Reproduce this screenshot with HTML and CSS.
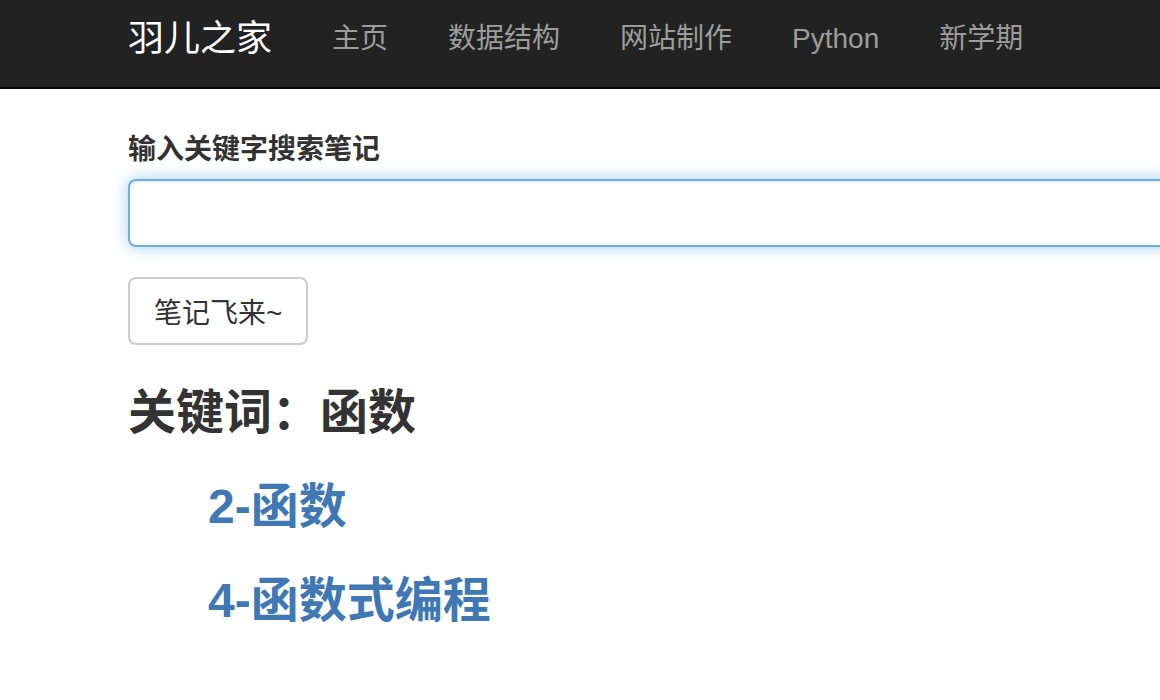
FILE: index.html
```html
<!DOCTYPE html>
<html lang="zh-CN">
<head>
<meta charset="utf-8">
<title>羽儿之家</title>
<link rel="stylesheet" href="styles.css">
</head>
<body>
<nav class="navbar">
  <div class="nav-inner">
    <a class="brand" href="#">羽儿之家</a>
    <ul class="nav-links">
      <li><a href="#">主页</a></li>
      <li><a href="#">数据结构</a></li>
      <li><a href="#">网站制作</a></li>
      <li><a href="#">Python</a></li>
      <li><a href="#">新学期</a></li>
    </ul>
  </div>
</nav>
<main class="container">
  <form class="search-form">
    <div class="form-group">
      <label class="form-label" for="kw">输入关键字搜索笔记</label>
      <input class="form-input" id="kw" type="text">
    </div>
    <button class="btn" type="button">笔记飞来~</button>
  </form>
  <h3 class="result-title">关键词：函数</h3>
  <ul class="result-list">
    <li><h3 class="result-item"><a href="#">2-函数</a></h3></li>
    <li><h3 class="result-item"><a href="#">4-函数式编程</a></h3></li>
  </ul>
</main>
</body>
</html>
```

FILE: styles.css
```css
html, body {
  margin: 0;
  padding: 0;
  overflow-x: hidden;
}
body {
  font-family: "Liberation Sans", "Noto Sans CJK SC", sans-serif;
  color: #333;
  background: #fff;
}
.navbar {
  background: #222;
  border-bottom: 2px solid #080808;
  height: 87px;
}
.nav-inner {
  display: flex;
  align-items: center;
  height: 100%;
  padding-left: 128px;
}
.brand {
  font-size: 36px;
  color: #fff;
  text-decoration: none;
  line-height: 40px;
  padding-right: 30px;
  margin-top: -10px;
}
.nav-links {
  display: flex;
  list-style: none;
  margin: 0;
  padding: 0;
  margin-top: -10px;
}
.nav-links a {
  display: block;
  padding: 0 30px;
  font-size: 28px;
  line-height: 40px;
  color: #9d9d9d;
  text-decoration: none;
}
.container {
  width: 1140px;
  margin-left: 128px;
}
.search-form {
  margin-top: 41px;
}
.form-group {
  margin-bottom: 30px;
}
.form-label {
  display: block;
  font-size: 28px;
  font-weight: bold;
  line-height: 40px;
  margin-bottom: 9px;
}
.form-input {
  display: block;
  box-sizing: border-box;
  width: 100%;
  height: 68px;
  margin: 0;
  border: 2px solid #66afe9;
  border-radius: 8px;
  outline: none;
  box-shadow: inset 0 2px 2px rgba(0,0,0,.075), 0 0 16px rgba(102,175,233,.6);
  font-size: 28px;
  padding: 12px 24px;
}
.btn {
  box-sizing: border-box;
  height: 68px;
  padding: 0 24px;
  font-family: inherit;
  font-size: 28px;
  color: #333;
  background: #fff;
  border: 2px solid #ccc;
  border-radius: 8px;
}
.result-title {
  font-size: 48px;
  font-weight: bold;
  line-height: 1.1;
  margin: 42px 0 41px;
}
.result-list {
  list-style: none;
  margin: 0;
  padding-left: 80px;
}
.result-item {
  font-size: 48px;
  font-weight: bold;
  line-height: 1.1;
  margin: 0 0 41px;
}
.result-item a {
  color: #3f78b5;
  text-decoration: none;
}
```
